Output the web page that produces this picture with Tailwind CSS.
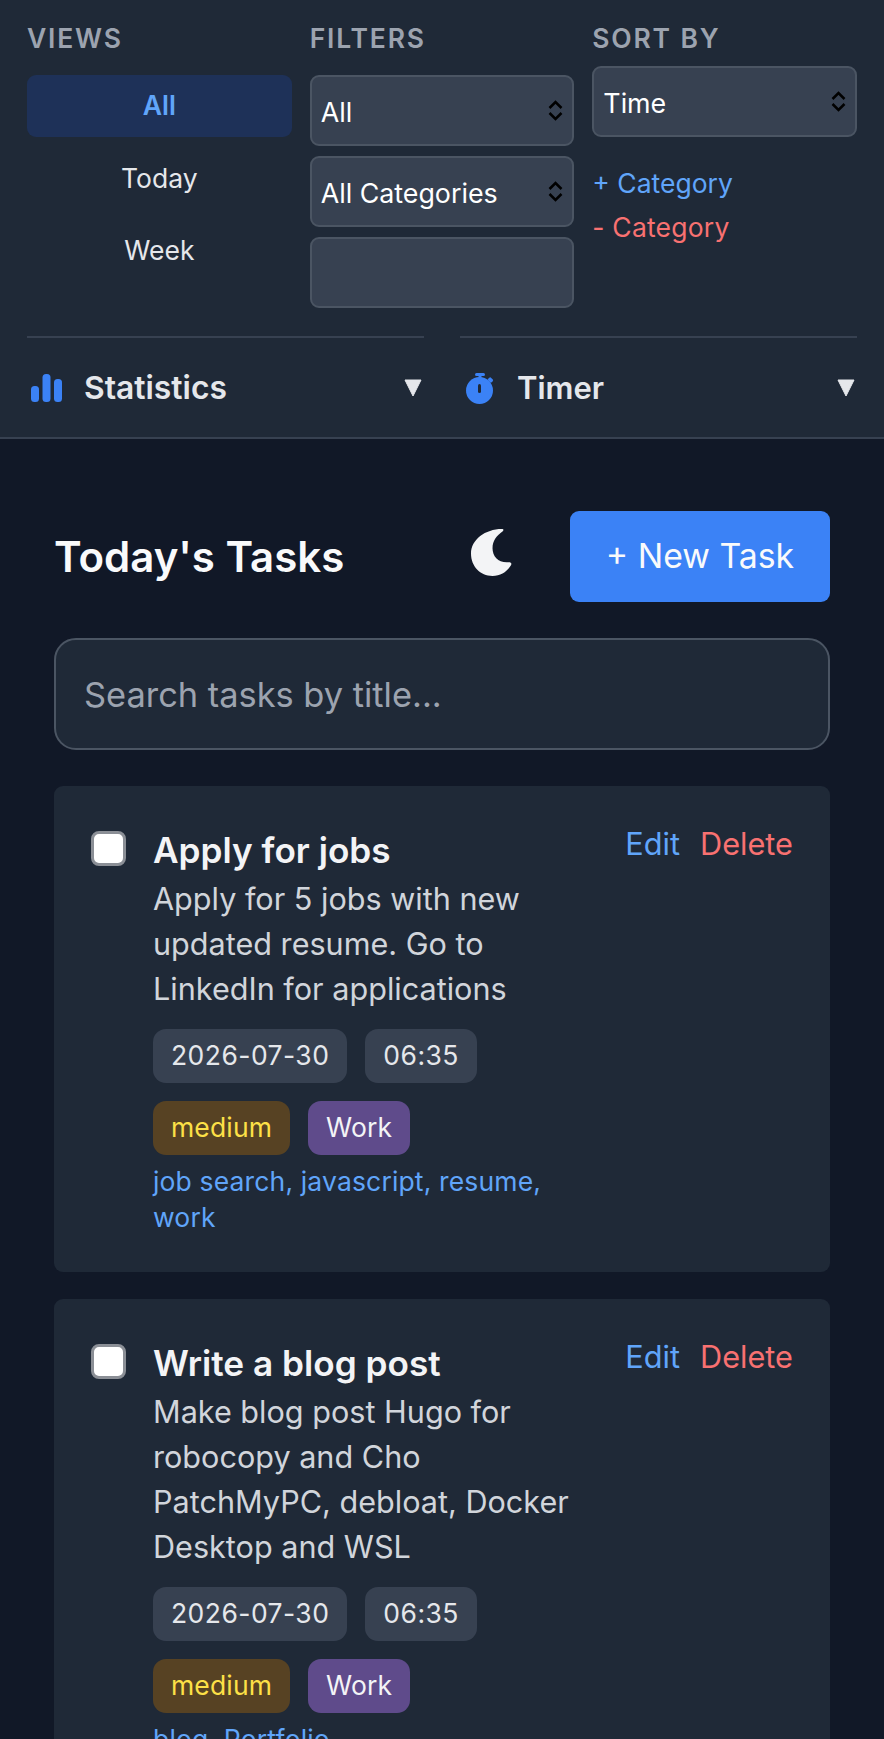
<!DOCTYPE html>
<html lang="en">
<head>
  <meta charset="UTF-8">
  <title>Today's Tasks</title>
  <script src="https://cdn.jsdelivr.net/npm/@tailwindcss/browser@4"></script>
</head>
<body class="bg-[#111827] font-['Inter',sans-serif] text-white h-[1739px] overflow-hidden">
  <!-- top panel -->
  <header class="bg-[#1f2937] border-b-2 border-[#374151] h-[439px] px-[27px] pt-[24px]">
    <div class="grid grid-cols-3 gap-x-[18px] h-[298px]">
      <div>
        <h3 class="text-[26.5px] leading-[28px] font-semibold tracking-[1.8px] text-[#9ca3af] mb-[23px]">VIEWS</h3>
        <div class="flex flex-col gap-[10px] text-[26.5px]">
          <button class="h-[62px] rounded-[9px] bg-[#1e3158] text-[#60a5fa] font-semibold">All</button>
          <button class="h-[62px] pt-[2px] text-[#e5e7eb]">Today</button>
          <button class="h-[62px] pt-[2px] text-[#e5e7eb]">Week</button>
        </div>
      </div>
      <div>
        <h3 class="text-[26.5px] leading-[28px] font-semibold tracking-[1.8px] text-[#9ca3af] mb-[23px]">FILTERS</h3>
        <div class="flex flex-col gap-[10px]">
          <div class="relative">
            <select class="appearance-none w-full h-[71px] rounded-[9px] bg-[#374151] border-2 border-[#4b5563] pl-[9px] pt-[4px] text-[26.8px]"><option>All</option></select>
            <svg class="absolute right-[11px] top-[25px] w-[15px] h-[21px]" viewBox="0 0 15 21" fill="none" stroke="#000" stroke-width="2.5"><path d="M1.5 8 7.5 2l6 6M1.5 13l6 6 6-6"/></svg>
          </div>
          <div class="relative">
            <select class="appearance-none w-full h-[71px] rounded-[9px] bg-[#374151] border-2 border-[#4b5563] pl-[9px] pt-[4px] text-[26.8px]"><option>All Categories</option></select>
            <svg class="absolute right-[11px] top-[25px] w-[15px] h-[21px]" viewBox="0 0 15 21" fill="none" stroke="#000" stroke-width="2.5"><path d="M1.5 8 7.5 2l6 6M1.5 13l6 6 6-6"/></svg>
          </div>
          <input class="w-full h-[71px] rounded-[9px] bg-[#374151] border-2 border-[#4b5563]">
        </div>
      </div>
      <div>
        <h3 class="text-[26.5px] leading-[28px] font-semibold tracking-[1.8px] text-[#9ca3af] mb-[14px]">SORT BY</h3>
        <div class="relative">
          <select class="appearance-none w-full h-[71px] rounded-[9px] bg-[#374151] border-2 border-[#4b5563] pl-[9px] pt-[4px] text-[26.8px]"><option>Time</option></select>
          <svg class="absolute right-[11px] top-[25px] w-[15px] h-[21px]" viewBox="0 0 15 21" fill="none" stroke="#000" stroke-width="2.5"><path d="M1.5 8 7.5 2l6 6M1.5 13l6 6 6-6"/></svg>
        </div>
        <div class="mt-[30px] flex flex-col gap-[12px] text-[26.5px] leading-[32px] items-start">
          <button class="text-[#60a5fa]">+ Category</button>
          <button class="text-[#f87171] tracking-[0.2px]">- Category</button>
        </div>
      </div>
    </div>
    <div class="grid grid-cols-2 gap-x-[36px] mt-[14px]">
      <div class="border-t-2 border-[#374151] h-[100px] pt-[2px] flex items-center justify-between pl-[4px] pr-[2px]">
        <div class="flex items-center gap-[22px]">
          <svg class="w-[31px] h-[28px]" viewBox="0 0 31 28" fill="#3b82f6"><rect x="0" y="12" width="8" height="16" rx="3.5"/><rect x="11.5" y="0" width="8" height="28" rx="3.5"/><rect x="23" y="5" width="8" height="23" rx="3.5"/></svg>
          <span class="text-[31.8px] font-semibold text-[#e5e7eb]">Statistics</span>
        </div>
        <svg class="w-[18px] h-[18px]" viewBox="0 0 18 18" fill="#e5e7eb"><path d="M1 1h16L9 17z" stroke="#e5e7eb" stroke-linejoin="round" stroke-width="1"/></svg>
      </div>
      <div class="border-t-2 border-[#374151] h-[100px] pt-[2px] flex items-center justify-between pl-[6px] pr-[2px]">
        <div class="flex items-center gap-[23px]">
          <svg class="w-[28px] h-[31px]" viewBox="0 0 28 31" fill="#3b82f6"><rect x="9" y="0" width="10" height="3" rx="1.5"/><rect x="12.5" y="2" width="3" height="4"/><circle cx="13.5" cy="17.5" r="13.5"/><rect x="22" y="5" width="5" height="4" rx="1.5" transform="rotate(45 24.5 7)"/><rect x="12" y="11" width="3" height="9" rx="1.5" fill="#1f2937"/></svg>
          <span class="text-[31px] font-semibold text-[#e5e7eb]">Timer</span>
        </div>
        <svg class="w-[18px] h-[18px]" viewBox="0 0 18 18" fill="#e5e7eb"><path d="M1 1h16L9 17z" stroke="#e5e7eb" stroke-linejoin="round" stroke-width="1"/></svg>
      </div>
    </div>
  </header>

  <main class="px-[54px] pt-[72px]">
    <div class="flex items-center h-[91px]">
      <h1 class="text-[42px] font-semibold text-[#f9fafb] flex-1">Today's Tasks</h1>
      <svg class="w-[41px] h-[48px] mr-[58px] -mt-[9px]" viewBox="0 0 40 45" preserveAspectRatio="none" fill="#f3f4f6"><path d="M30 1C14 1 0 11 0 24 0 36 9 45 21 45 29 45 35 41 39 35 40 33 39 32 37 32 27 33 21 27 21 19 21 12 25 7 31 3 32 2 32 1 30 1Z"/></svg>
      <button class="w-[260px] h-[91px] rounded-[9px] bg-[#3b82f6] text-[33.8px] text-[#f9fafb]">+ New Task</button>
    </div>
    <input class="w-full h-[112px] mt-[36px] rounded-[22px] bg-[#1f2937] border-2 border-[#4b5563] px-[28px] text-[34.4px] placeholder:text-[#9ca3af]" placeholder="Search tasks by title...">

    <div class="mt-[36px] flex flex-col gap-[27px]">
      <article class="bg-[#1f2937] rounded-[9px] px-[37px] pt-[40px] pb-[37px] flex items-start">
        <span class="w-[35px] h-[35px] mt-[5px] rounded-[8px] bg-white border-[3px] border-[#8b8f96] shrink-0 mr-[27px]"></span>
        <div class="w-[425px]">
          <h2 class="text-[35.2px] leading-[48px] mb-[2px] font-semibold text-[#f3f4f6]">Apply for jobs</h2>
          <p class="text-[30.6px] leading-[45px] text-[#d1d5db]">Apply for 5 jobs with new updated resume. Go to LinkedIn for applications</p>
          <div class="mt-[18px] flex gap-[18px] text-[26.5px] tracking-[0.45px] text-[#e5e7eb]">
            <span class="h-[54px] px-[18px] rounded-[13px] bg-[#374151] flex items-center">2026-07-30</span>
            <span class="h-[54px] px-[18px] rounded-[13px] bg-[#374151] flex items-center">06:35</span>
          </div>
          <div class="mt-[18px] flex gap-[18px] text-[26.5px] tracking-[0.15px]">
            <span class="h-[54px] px-[18px] rounded-[13px] bg-[#574223] text-[#fde047] flex items-center">medium</span>
            <span class="h-[54px] px-[18px] rounded-[13px] bg-[#5f4b8b] text-[#f3f4f6] flex items-center">Work</span>
          </div>
          <p class="mt-[9px] text-[26.5px] tracking-[0.15px] leading-[35.5px] text-[#60a5fa]">job search, javascript, resume, work</p>
        </div>
        <div class="ml-auto flex gap-[20px] text-[30.7px] leading-[45px] -mt-[5px]">
          <a class="text-[#60a5fa]">Edit</a>
          <a class="text-[#f87171]">Delete</a>
        </div>
      </article>

      <article class="bg-[#1f2937] rounded-[9px] px-[37px] pt-[40px] pb-[37px] flex items-start">
        <span class="w-[35px] h-[35px] mt-[5px] rounded-[8px] bg-white border-[3px] border-[#8b8f96] shrink-0 mr-[27px]"></span>
        <div class="w-[425px]">
          <h2 class="text-[35.2px] leading-[48px] mb-[2px] font-semibold text-[#f3f4f6]">Write a blog post</h2>
          <p class="text-[30.6px] leading-[45px] text-[#d1d5db]">Make blog post Hugo for robocopy and Cho PatchMyPC, debloat, Docker Desktop and WSL</p>
          <div class="mt-[18px] flex gap-[18px] text-[26.5px] tracking-[0.45px] text-[#e5e7eb]">
            <span class="h-[54px] px-[18px] rounded-[13px] bg-[#374151] flex items-center">2026-07-30</span>
            <span class="h-[54px] px-[18px] rounded-[13px] bg-[#374151] flex items-center">06:35</span>
          </div>
          <div class="mt-[18px] flex gap-[18px] text-[26.5px] tracking-[0.15px]">
            <span class="h-[54px] px-[18px] rounded-[13px] bg-[#574223] text-[#fde047] flex items-center">medium</span>
            <span class="h-[54px] px-[18px] rounded-[13px] bg-[#5f4b8b] text-[#f3f4f6] flex items-center">Work</span>
          </div>
          <p class="mt-[9px] text-[26.5px] tracking-[0.15px] leading-[35.5px] text-[#60a5fa]">blog, Portfolio</p>
        </div>
        <div class="ml-auto flex gap-[20px] text-[30.7px] leading-[45px] -mt-[5px]">
          <a class="text-[#60a5fa]">Edit</a>
          <a class="text-[#f87171]">Delete</a>
        </div>
      </article>
    </div>
  </main>
</body>
</html>
